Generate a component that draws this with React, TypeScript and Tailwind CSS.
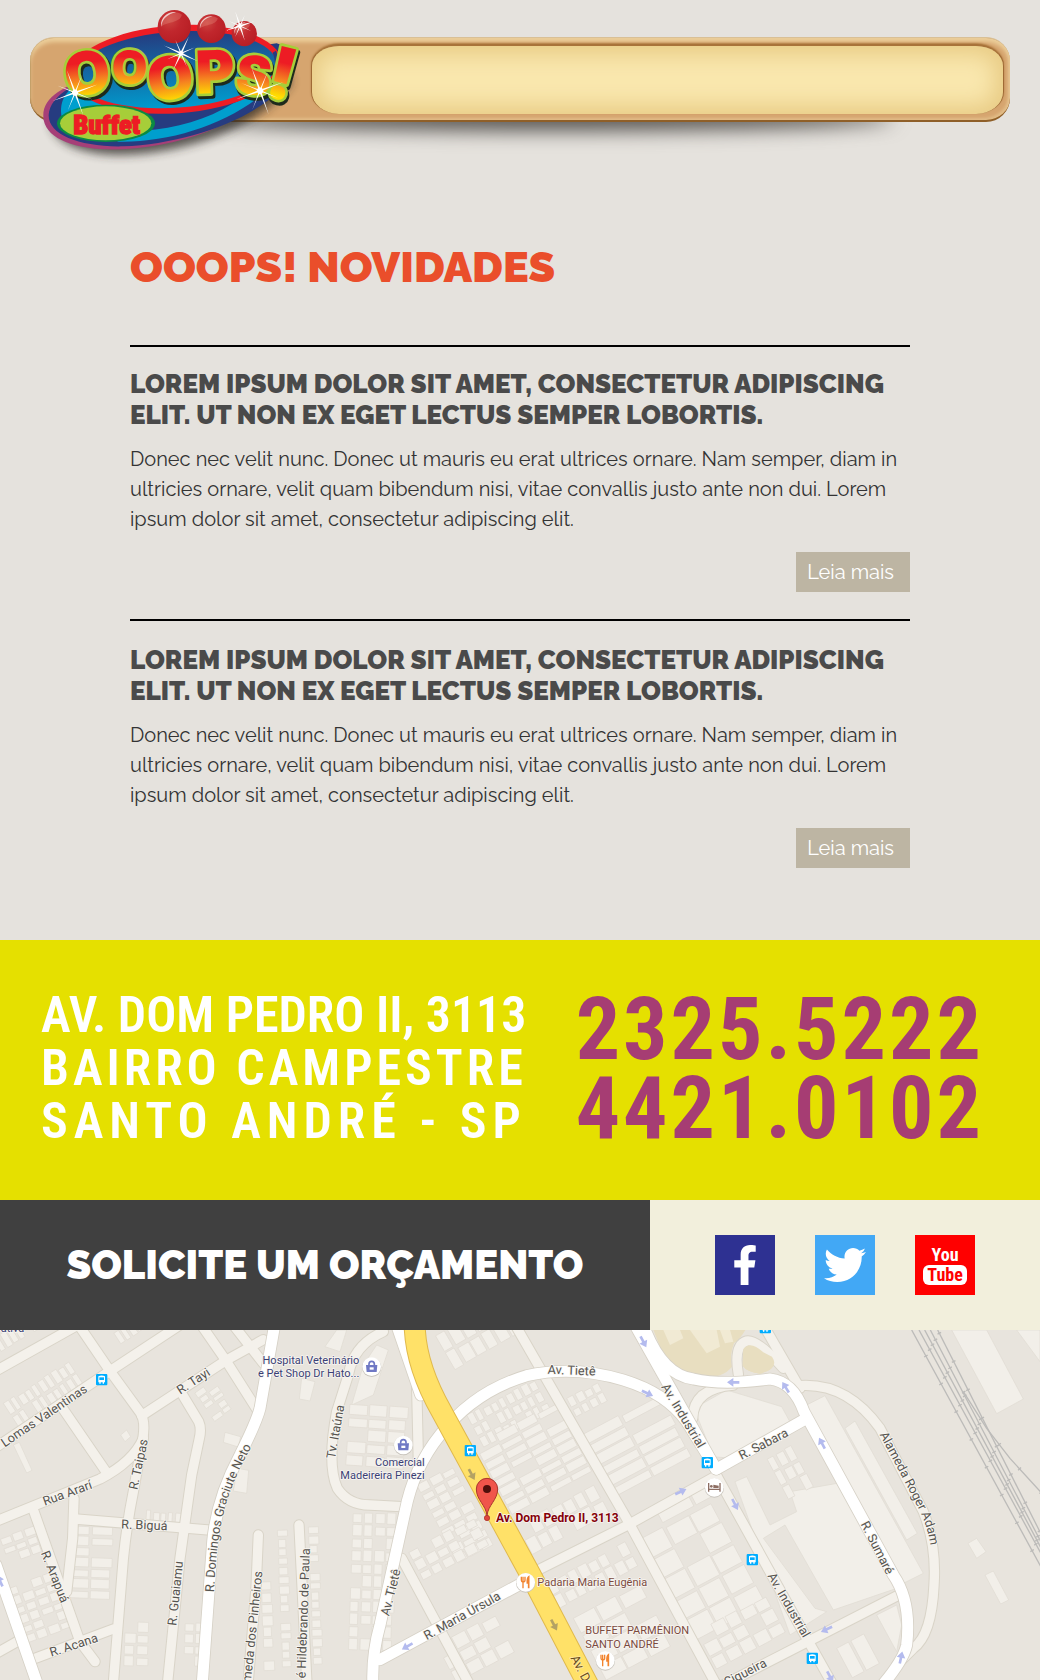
import { FaFacebookF, FaTwitter } from "react-icons/fa";

type Block = { x: number; y: number; a: number; cols: number; rows: number; w: number; h: number; seed: number };
type Label = { t: string; x: number; y: number; a: number };

const MINOR_ROADS = [
  "M-20 372L330 138L600 -40",
  "M-20 142L230 2",
  "M236 0L330 138L420 262Q440 290 425 360L400 500Q380 600 370 700L338 1100",
  "M425 272L680 105L790 44",
  "M604 0L680 110L776 262",
  "M700 0L790 115",
  "M542 200L596 290Q605 310 598 340L575 450L540 700L500 1100",
  "M188 250L318 440",
  "M-20 592L300 462Q400 410 430 340",
  "M102 560L240 950L285 1010",
  "M222 520L218 640L200 800",
  "M225 582L640 616",
  "M-20 990L60 945M95 1004L340 912",
  "M775 630L768 790L742 1100",
  "M897 600L905 760L922 1100",
  "M1150 20Q1060 60 1045 150L1010 260Q980 420 1012 490Q1045 540 1110 540L1205 545",
  "M1250 180L1255 400",
  "M1205 700L1420 1100",
  "M1540 -10L1885 590L2160 1100",
  "M1600 742L1880 602L2150 452",
  "M2150 452L2420 940L2510 1100",
  "M2150 1090L2700 808",
  "M2395 182Q2540 170 2640 310L2770 560Q2810 660 2802 780Q2795 930 2740 970L2690 1020",
  "M2290 0L2400 190",
  "M2215 148Q2200 60 2240 48Q2270 40 2350 130",
  "M2078 280Q2080 190 2200 180",
];

const WHITE_ROADS = [
  "M-12 720L120 1100",
  "M824 0L780 250Q770 290 720 390Q650 520 638 650L605 1100",
  "M1190 0L1262 210",
  "M1120 1100Q1112 1000 1140 900L1215 560Q1240 430 1320 330Q1420 200 1580 152Q1720 120 1870 165Q2000 205 2060 290L2148 432",
  "M1140 1004L1565 775",
  "M1905 0L2012 190L2148 432",
  "M1930 0Q1985 150 2080 162Q2170 182 2310 162Q2380 170 2412 260L2680 750Q2735 830 2720 960Q2710 1010 2630 1100",
  "M2150 432L2420 280",
];

const BLOCKS: Block[] = [
  { x: -20, y: 40, a: -31, cols: 9, rows: 1, w: 19, h: 46, seed: 2 },
  { x: 10, y: 235, a: -33, cols: 10, rows: 2, w: 20, h: 40, seed: 3 },
  { x: 340, y: 22, a: -33, cols: 7, rows: 1, w: 18, h: 42, seed: 4 },
  { x: 640, y: 165, a: 55, cols: 5, rows: 2, w: 18, h: 32, seed: 5 },
  { x: 212, y: 600, a: 2, cols: 2, rows: 7, w: 62, h: 28, seed: 6 },
  { x: 0, y: 640, a: -20, cols: 3, rows: 3, w: 34, h: 24, seed: 4 },
  { x: 20, y: 790, a: -20, cols: 4, rows: 6, w: 34, h: 26, seed: 7 },
  { x: 440, y: 555, a: 4, cols: 5, rows: 1, w: 18, h: 32, seed: 1 },
  { x: 376, y: 890, a: 2, cols: 2, rows: 4, w: 34, h: 30, seed: 5 },
  { x: 556, y: 890, a: 2, cols: 2, rows: 4, w: 28, h: 30, seed: 9 },
  { x: 862, y: 615, a: 88, cols: 15, rows: 1, w: 24, h: 30, seed: 1 },
  { x: 955, y: 605, a: 88, cols: 16, rows: 1, w: 24, h: 30, seed: 2 },
  { x: 815, y: 770, a: 88, cols: 8, rows: 1, w: 30, h: 32, seed: 6 },
  { x: 1050, y: 235, a: 4, cols: 3, rows: 5, w: 56, h: 34, seed: 4 },
  { x: 1060, y: 560, a: 2, cols: 4, rows: 11, w: 30, h: 34, seed: 8 },
  { x: 1305, y: 30, a: -30, cols: 7, rows: 2, w: 36, h: 58, seed: 6 },
  { x: 1400, y: 270, a: -28, cols: 9, rows: 3, w: 22, h: 34, seed: 3 },
  { x: 1425, y: 360, a: -28, cols: 4, rows: 8, w: 66, h: 26, seed: 5 },
  { x: 1700, y: 220, a: -28, cols: 4, rows: 2, w: 24, h: 30, seed: 2 },
  { x: 1745, y: 330, a: -28, cols: 2, rows: 6, w: 130, h: 32, seed: 1 },
  { x: 1550, y: 600, a: -28, cols: 7, rows: 2, w: 34, h: 48, seed: 5 },
  { x: 1250, y: 480, a: -28, cols: 3, rows: 9, w: 38, h: 26, seed: 2 },
  { x: 1225, y: 680, a: -28, cols: 6, rows: 3, w: 34, h: 30, seed: 7 },
  { x: 1310, y: 960, a: -28, cols: 4, rows: 3, w: 46, h: 40, seed: 5 },
  { x: 1640, y: 775, a: -28, cols: 8, rows: 2, w: 30, h: 40, seed: 6 },
  { x: 1720, y: 880, a: -28, cols: 3, rows: 4, w: 72, h: 50, seed: 3 },
  { x: 1925, y: 640, a: -28, cols: 3, rows: 5, w: 76, h: 66, seed: 1 },
  { x: 1960, y: 540, a: -28, cols: 2, rows: 1, w: 110, h: 60, seed: 2 },
  { x: 2090, y: 920, a: -28, cols: 5, rows: 3, w: 44, h: 40, seed: 5 },
  { x: 2300, y: 400, a: -28, cols: 3, rows: 3, w: 26, h: 44, seed: 6 },
  { x: 2510, y: 970, a: -28, cols: 2, rows: 1, w: 44, h: 100, seed: 2 },
];

const BUILDINGS = [
  "M2082 250L2180 195L2345 245L2375 300L2195 400L2140 395Z",
  "M2410 245L2475 212L2770 745L2700 780Z",
  "M2535 310L2565 288L2752 625L2720 645Z",
  "M2205 470L2240 455L2310 600L2390 560L2370 500L2540 470L2690 790L2500 855L2355 600L2290 640L2445 850L2480 860L2370 930Z",
  "M2855 15L2960 15L3070 222L2990 266Z",
  "M3050 15L3120 15L3120 110Z",
  "M2904 655L2930 640L2958 680L2930 700Z",
  "M2955 750L2980 738L3026 825L3002 837Z",
  "M2630 870L2690 840L2705 900L2690 980Z",
  "M1090 120L1130 60L1165 75L1120 210L1055 240Z",
  "M1010 15L1040 15L1020 80L975 65Z",
  "M905 160L945 170L930 228L898 222Z",
  "M362 330L380 315L392 335L375 350Z",
  "M675 322L722 335L715 366L670 352Z",
  "M712 430L746 436L740 505L700 498Z",
  "M40 360L58 352L96 436L80 444Z",
];

const STREETS: Label[] = [
  { t: "Lomas Valentinas", x: 132, y: 272, a: -34 },
  { t: "R. Tayi", x: 580, y: 168, a: -33 },
  { t: "R. Taipas", x: 415, y: 418, a: -78 },
  { t: "Rua Ararí", x: 202, y: 504, a: -20 },
  { t: "R. Biguá", x: 433, y: 600, a: 2 },
  { t: "R. Arapuá", x: 165, y: 755, a: 68 },
  { t: "R. Acana", x: 221, y: 960, a: -18 },
  { t: "R. Guaiamu", x: 526, y: 805, a: -84 },
  { t: "meda dos Pinheiros", x: 757, y: 905, a: -84 },
  { t: "é Hildebrando de Paula", x: 910, y: 865, a: -88 },
  { t: "Tv. Itaúna", x: 1006, y: 320, a: -80 },
  { t: "Av. Tietê", x: 1715, y: 136, a: 2 },
  { t: "Av. Tietê", x: 1172, y: 802, a: -76 },
  { t: "R. Maria Úrsula", x: 1386, y: 872, a: -29 },
  { t: "Av. Industrial", x: 2050, y: 272, a: 59 },
  { t: "R. Sabara", x: 2290, y: 357, a: -27 },
  { t: "R. Sumaré", x: 2632, y: 668, a: 63 },
  { t: "Av. Industrial", x: 2367, y: 840, a: 60 },
  { t: "Siqueira", x: 2236, y: 1042, a: -27 },
];

const BUS_STOPS = [[305, 164], [1411, 377], [2122, 413], [2257, 704], [2437, 1000], [2296, 8]];
const BLUE_ARROWS = [
  [1930, 50, 62], [1942, 205, 25], [2042, 500, -25], [1222, 964, 150], [2200, 172, 180], [2357, 187, 238],
  [2466, 355, 242], [2205, 538, 63], [2480, 913, 155], [2703, 998, 282], [2490, 1055, 62], [0, 768, 245],
];
const ROAD_ARROWS = [[1415, 448, 62], [1662, 900, 62]];
const ARROW = "M-18 -4L0 -4L0 -13L19 0L0 13L0 4L-18 4Z";

function BlockShape({ b }: { b: Block }) {
  const cells = [];
  for (let r = 0; r < b.rows; r++) {
    for (let c = 0; c < b.cols; c++) {
      const n = (r * 7 + c * 5 + b.seed * 3) % 11;
      if (n === 4) continue;
      cells.push(
        <rect
          key={`${r}-${c}`}
          x={c * (b.w + 4)}
          y={r * (b.h + 4) + (n % 3) * 3}
          width={b.w - (n % 4) * 2}
          height={b.h - (n % 3) * 4}
        />,
      );
    }
  }
  return <g transform={`translate(${b.x} ${b.y}) rotate(${b.a})`}>{cells}</g>;
}

function Poi({ x, y, kind }: { x: number; y: number; kind: "shop" | "food" | "hotel" }) {
  return (
    <g transform={`translate(${x} ${y})`}>
      <circle r="29" cy="2" fill="#c9c5bd" />
      <circle r="28" fill="#fff" />
      {kind === "shop" && (
        <g>
          <path d="M-8 -4V-8A8 8 0 0 1 8 -8V-4" fill="none" stroke="#6f78c4" strokeWidth="5" />
          <path d="M-17 -5H17L15 16H-15Z" fill="#6f78c4" />
          <path d="M-6 2H6V9H-6Z" fill="#fff" />
        </g>
      )}
      {kind === "food" && (
        <g stroke="#f2842f" fill="none" strokeWidth="4">
          <path d="M-13 -17V-6Q-13 -1 -8 -1Q-2 -1 -2 -6V-17M-8 -17V18" />
          <path d="M9 18V-16Q4 -12 5 2H9" fill="#f2842f" strokeWidth="5" />
        </g>
      )}
      {kind === "hotel" && (
        <g fill="#8d6e63">
          <path d="M-19 -13H-15V4H15V-13H19V13H15V8H-15V13H-19Z" />
          <circle cx="-9" cy="-3" r="4" />
          <path d="M-3 -8L13 -5V2H-3Z" />
        </g>
      )}
    </g>
  );
}

function StreetMap() {
  return (
    <svg viewBox="0 15 3120 1050" className="block w-full bg-[#e8e4dd]" role="img" aria-label="Mapa: Av. Dom Pedro II, 3113">
      <g fill="#f2efe9" stroke="#e0dbd2" strokeWidth="2">
        {BUILDINGS.map((d) => <path key={d} d={d} />)}
        {BLOCKS.map((b) => <BlockShape key={`${b.x}-${b.y}`} b={b} />)}
      </g>
      <g fill="#e8dec0">
        <path d="M1960 15H2236Q2222 40 2202 55Q2188 90 2196 125Q2170 158 2110 158Q2030 150 1990 90Z" />
        <path d="M2230 72Q2250 45 2290 82L2316 95Q2340 130 2280 146Q2240 140 2228 122Z" />
      </g>
      <g fill="#f1ead4">
        <path d="M2070 15L2120 85L2160 65L2150 15Z" />
        <path d="M1990 15L2010 60L2050 40L2040 15Z" />
        <path d="M2160 15H2190L2200 50L2175 55Z" />
      </g>

      <g fill="none" stroke="#bcbbb9" strokeWidth="4">
        {[-22, 0, 17, 34, 56].map((o) => (
          <g key={o}>
            <path d={`M${2757 + o} 15L${3150 + o - (o > 0 ? o / 2 : 0)} 735`} />
            <path d={`M${2757 + o} 15L${3150 + o - (o > 0 ? o / 2 : 0)} 735`} strokeWidth="12" strokeDasharray="4 91" strokeDashoffset={o + 30} />
          </g>
        ))}
        <path d="M2890 200L2960 310L3030 400L3130 510" />
        <path d="M2890 200L2960 310L3030 400L3130 510" strokeWidth="12" strokeDasharray="4 91" />
      </g>

      <g fill="none" strokeLinecap="round" strokeLinejoin="round">
        <g stroke="#d9d4c8" strokeWidth="34">{MINOR_ROADS.map((d) => <path key={d} d={d} />)}</g>
        <g stroke="#f4f1eb" strokeWidth="28">{MINOR_ROADS.map((d) => <path key={d} d={d} />)}</g>
        <path d="M2230 72Q2250 45 2290 82L2316 95Q2340 130 2280 146Q2240 140 2228 122Z" fill="#e8dec0" />
        <g stroke="#d6d1c6" strokeWidth="38">{WHITE_ROADS.map((d) => <path key={d} d={d} />)}</g>
        <g stroke="#ffffff" strokeWidth="33">{WHITE_ROADS.map((d) => <path key={d} d={d} />)}</g>
        <path d="M1244 -20Q1240 110 1325 260L1592 750L1780 1110" stroke="#e0b94c" strokeWidth="66" />
        <path d="M1244 -20Q1240 110 1325 260L1592 750L1780 1110" stroke="#ffe168" strokeWidth="60" />
      </g>

      <g fill="#b4bbee">
        {BLUE_ARROWS.map(([x, y, a]) => <path key={`${x}-${y}`} d={ARROW} transform={`translate(${x} ${y}) rotate(${a})`} />)}
      </g>
      <g fill="#b3a264">
        {ROAD_ARROWS.map(([x, y, a]) => <path key={`${x}-${y}`} d={ARROW} transform={`translate(${x} ${y}) rotate(${a})`} />)}
      </g>

      {BUS_STOPS.map(([x, y]) => (
        <g key={`${x}-${y}`} transform={`translate(${x} ${y})`}>
          <rect x="-17" y="-17" width="34" height="34" rx="3" fill="#00adff" />
          <path d="M-10 -10Q0 -15 10 -10V8H7V12H3V8H-3V12H-7V8H-10Z" fill="#fff" />
          <path d="M-7 -7H7V1H-7Z" fill="#00adff" />
        </g>
      ))}

      <g className="font-['Roboto',sans-serif] text-[38px]" fill="#56544f" stroke="#f8f6f2" strokeWidth="5" strokeLinejoin="round" paintOrder="stroke" textAnchor="middle">
        {STREETS.map((l) => (
          <text key={`${l.x}-${l.y}`} y="13" transform={`translate(${l.x} ${l.y}) rotate(${l.a})`}>{l.t}</text>
        ))}
        <path id="domingos" d="M642 802Q650 640 672 560Q690 480 756 362" fill="none" stroke="none" />
        <path id="alameda" d="M2638 328Q2720 480 2760 560Q2785 610 2792 670" fill="none" stroke="none" />
        <text textAnchor="start"><textPath href="#domingos">R. Domingos Graciute Neto</textPath></text>
        <text textAnchor="start"><textPath href="#alameda">Alameda Roger Adam</textPath></text>
        <text fill="#6b4f1c" stroke="#ffe9a0" y="13" transform="translate(1742 1030) rotate(62)">Av. D</text>
      </g>

      <Poi x={1115} y={125} kind="shop" />
      <Poi x={1210} y={360} kind="shop" />
      <Poi x={1577} y={772} kind="food" />
      <Poi x={1816} y={1006} kind="food" />
      <Poi x={2143} y={487} kind="hotel" />

      <g className="font-['Roboto',sans-serif] text-[33px]" stroke="#f8f6f2" strokeWidth="5" strokeLinejoin="round" paintOrder="stroke">
        <g fill="#3b3f75">
          <text x="2" y="22">ativa</text>
          <g textAnchor="end">
            <text x="1078" y="116">Hospital Veterinário</text>
            <text x="1078" y="155">e Pet Shop Dr Hato...</text>
            <text x="1274" y="422">Comercial</text>
            <text x="1274" y="462">Madeireira Pinezi</text>
          </g>
        </g>
        <g fill="#7b4a3e">
          <text x="1612" y="783">Padaria Maria Eugênia</text>
          <text x="1756" y="928">BUFFET PARMÊNION</text>
          <text x="1756" y="968">SANTO ANDRÉ</text>
        </g>
        <text x="1488" y="592" fill="#850009" className="text-[36px] font-bold">Av. Dom Pedro II, 3113</text>
      </g>

      <circle cx="1461" cy="579" r="8" fill="#e0453c" stroke="#a52a22" strokeWidth="2" />
      <path d="M1461 572C1458 540 1429 525 1429 492A32 32 0 0 1 1493 492C1493 525 1464 540 1461 572Z" fill="#f0554b" stroke="#a8362e" strokeWidth="3" />
      <circle cx="1461" cy="492" r="12" fill="#4f0f0b" />
    </svg>
  );
}

function Sparkle({ x, y, r, a }: { x: number; y: number; r: number; a: number }) {
  return (
    <g transform={`translate(${x} ${y}) rotate(${a})`} fill="#fff">
      {[0, 42, 90, 132].map((d, i) => (
        <path key={d} transform={`rotate(${d})`} d={i % 2 ? `M${-r * 0.8} 0L0 -2L${r * 0.8} 0L0 2Z` : `M${-r} 0L0 -3L${r} 0L0 3Z`} />
      ))}
      <circle r={r / 8} />
    </g>
  );
}

const LOGO_LETTERS = [
  { t: "O", x: 201, y: 219, a: -7, size: "text-[178px]" },
  { t: "O", x: 329, y: 202, a: 2, size: "text-[138px]" },
  { t: "O", x: 450, y: 233, a: -9, size: "text-[178px]" },
  { t: "P", x: 585, y: 215, a: -2, size: "text-[178px]" },
  { t: "S", x: 702, y: 226, a: 6, size: "text-[160px]" },
  { t: "!", x: 788, y: 220, a: 14, size: "text-[216px]" },
];

function Logo() {
  return (
    <svg viewBox="0 0 900 510" className="block w-[300px]" aria-label="Ooops! Buffet">
      <defs>
        <linearGradient id="lettering" gradientUnits="userSpaceOnUse" x1="0" y1="-75" x2="0" y2="70">
          <stop offset="0.3" stopColor="#ed1c24" />
          <stop offset="0.65" stopColor="#f58220" />
          <stop offset="1" stopColor="#ffde00" />
        </linearGradient>
        <linearGradient id="sky" x1="0" y1="0" x2="0" y2="1">
          <stop offset="0" stopColor="#253c80" />
          <stop offset="1" stopColor="#009cce" />
        </linearGradient>
        <radialGradient id="ball" cx="0.35" cy="0.3" r="0.7">
          <stop offset="0" stopColor="#cc4540" />
          <stop offset="0.5" stopColor="#c1272d" />
          <stop offset="1" stopColor="#b81f25" />
        </radialGradient>
        <filter id="soft" x="-20%" y="-40%" width="140%" height="180%">
          <feGaussianBlur stdDeviation="14" />
        </filter>
      </defs>
      <path d="M90 370C110 450 240 475 360 462C520 448 720 380 815 250L800 200L120 320Z" fill="#2e2a28" opacity="0.75" filter="url(#soft)" />
      <path d="M70 350C68 290 130 262 230 220L820 190C820 260 700 340 560 395C470 430 360 450 260 448C150 444 72 410 70 350Z" fill="#a63f78" />
      <path d="M86 345C90 285 170 240 300 200L770 130C830 150 840 220 780 270C680 370 480 432 310 439C180 442 84 405 86 345Z" fill="#263c80" />
      <path d="M124 345C118 290 150 262 200 235L250 310L170 380Q126 375 124 345Z" fill="#009fce" />
      <path d="M290 425C450 430 640 370 750 262L640 310C560 360 470 385 370 392Z" fill="#009fce" />
      <ellipse cx="468" cy="208" rx="318" ry="132" transform="rotate(-4 468 208)" fill="#ed1c24" />
      <ellipse cx="468" cy="209" rx="302" ry="114" transform="rotate(-4 468 209)" fill="url(#sky)" />
      <path d="M768 152Q788 200 755 262L750 262Q775 200 758 158Z" fill="#263c80" />
      {[[463, 80, 50], [574, 86, 43], [673, 101, 38]].map(([x, y, r]) => (
        <g key={x} transform={`translate(${x} ${y}) scale(${r})`}>
          <circle r="1" fill="url(#ball)" />
          <path d="M-0.8 0C-0.85 -0.8 0 -1.05 0.45 -0.72C0.35 -0.2 -0.5 -0.3 -0.8 0Z" fill="#f2b09c" opacity="0.25" />
          <path d="M-0.8 0C-0.85 -0.6 -0.3 -0.95 0.1 -0.86C-0.4 -0.75 -0.7 -0.5 -0.8 0Z" fill="#fff" opacity="0.7" />
        </g>
      ))}
      <g className="font-['Inter',sans-serif] font-black" textAnchor="middle" strokeLinejoin="round">
        {LOGO_LETTERS.map((l) => (
          <g key={l.x} transform={`translate(${l.x} ${l.y}) rotate(${l.a})`}>
            <text aria-hidden="true" x="5" y="8" dy="0.36em" className={l.size} fill="#1d2a1c" stroke="#1d2a1c" strokeWidth="18">{l.t}</text>
            <text y="0" dy="0.36em" className={l.size} fill="url(#lettering)" stroke="#a6ce39" strokeWidth="16" paintOrder="stroke">{l.t}</text>
          </g>
        ))}
      </g>
      <ellipse cx="258" cy="370" rx="147" ry="56" fill="#0b8a43" />
      <ellipse cx="257" cy="370" rx="137" ry="51" fill="#a6ce39" />
      <text x="260" y="402" textAnchor="middle" className="font-['Roboto_Condensed',sans-serif] text-[80px] font-black" fill="#ed1c24" stroke="#ed1c24" strokeWidth="4">Buffet</text>
      <Sparkle x={165} y={278} r={72} a={-20} />
      <Sparkle x={483} y={160} r={56} a={25} />
      <Sparkle x={720} y={272} r={76} a={-20} />
      <Sparkle x={660} y={78} r={46} a={-18} />
    </svg>
  );
}

function Header() {
  return (
    <header className="relative px-[30px] pt-[37px] pb-12">
      <div className="absolute top-[106px] right-[14%] left-[20%] h-6 rounded-[50%] bg-[#4a4744] blur-[10px]" />
      <div className="relative flex h-[85px] justify-end rounded-[24px] border-t border-b-2 border-t-[#d9c096] border-b-[#8f5f28] bg-[#d6a56f] p-[6px] shadow-[inset_0_4px_4px_#eccf9b,inset_-2px_-2px_3px_#e2bd88,inset_1px_0_1px_#a47a43]">
        <nav aria-label="Principal" className="ml-[275px] w-full rounded-[28px/22px] border-t-2 border-r border-l border-t-[#a8733a] border-r-[#a06a35] border-l-[#a06a35] bg-[#f9e7ae] shadow-[inset_0_0_22px_8px_#e8cb84,0_-1px_2px_#b07c42]" />
      </div>
      <a href="#" className="absolute top-0 left-5">
        <Logo />
      </a>
    </header>
  );
}

const POSTS = [1, 2].map((id) => ({
  id,
  title: "Lorem ipsum dolor sit amet, consectetur adipiscing elit. Ut non ex eget lectus semper lobortis.",
  body: "Donec nec velit nunc. Donec ut mauris eu erat ultrices ornare. Nam semper, diam in ultricies ornare, velit quam bibendum nisi, vitae convallis justo ante non dui. Lorem ipsum dolor sit amet, consectetur adipiscing elit.",
}));

function News() {
  return (
    <main className="px-[12.5%] pt-[71px] pb-[72px]">
      <h1 className="text-[43px] leading-[52px] font-black text-[#ea4e2b] uppercase">Ooops! Novidades</h1>
      <div className="mt-[52px] flex flex-col gap-[27px]">
        {POSTS.map((p) => (
          <article key={p.id} className="border-t-2 border-black pt-[22px] last:pt-6">
            <h2 className="text-[26px] leading-[31px] font-black text-[#4a4a4a] uppercase">{p.title}</h2>
            <p className="mt-[13px] text-xl leading-[30px] text-[#333]">{p.body}</p>
            <div className="mt-[18px] flex justify-end">
              <a href="#" className="bg-[#bdb5a3] pr-4 pl-[11px] text-xl leading-10 text-white">Leia mais</a>
            </div>
          </article>
        ))}
      </div>
    </main>
  );
}

function Contact() {
  return (
    <section className="flex justify-between bg-[#e5e000] pt-[49px] pr-14 pb-[52px] pl-[41px] whitespace-nowrap">
      <address className="font-['Roboto_Condensed',sans-serif] text-[50px] leading-[53px] font-semibold text-white not-italic">
        <p>AV. DOM PEDRO II, 3113</p>
        <p className="tracking-[4px]">BAIRRO CAMPESTRE</p>
        <p className="tracking-[6px]">SANTO ANDRÉ - SP</p>
      </address>
      <div className="flex flex-col font-['Roboto_Condensed',sans-serif] text-[88px] leading-[79px] font-bold tracking-[3px] text-[#a63d73]">
        <a href="tel:23255222">2325.5222</a>
        <a href="tel:44210102">4421.0102</a>
      </div>
    </section>
  );
}

function ActionBar() {
  return (
    <section className="flex h-[130px]">
      <a href="#" className="flex w-[62.5%] items-center justify-center bg-[#404040] text-[40px] font-black text-white">SOLICITE UM ORÇAMENTO</a>
      <div className="flex flex-1 items-center justify-center gap-10 bg-[#f2efdc]">
        <a href="#" aria-label="Facebook" className="flex size-[60px] items-center justify-center bg-[#2e3192] text-[40px] text-white"><FaFacebookF /></a>
        <a href="#" aria-label="Twitter" className="flex size-[60px] items-center justify-center bg-[#42a8f5] text-[42px] text-white"><FaTwitter /></a>
        <a href="#" aria-label="YouTube" className="flex size-[60px] flex-col items-center justify-center bg-[#ff0000] font-['Roboto_Condensed',sans-serif] text-lg leading-5 font-bold text-white">
          <span>You</span>
          <span className="rounded-md bg-white px-1 text-[#ff0000]">Tube</span>
        </a>
      </div>
    </section>
  );
}

export default function App() {
  return (
    <div className="overflow-hidden bg-[#e5e2dd] font-['Raleway','Lato',sans-serif]">
      <Header />
      <News />
      <Contact />
      <ActionBar />
      <StreetMap />
    </div>
  );
}
